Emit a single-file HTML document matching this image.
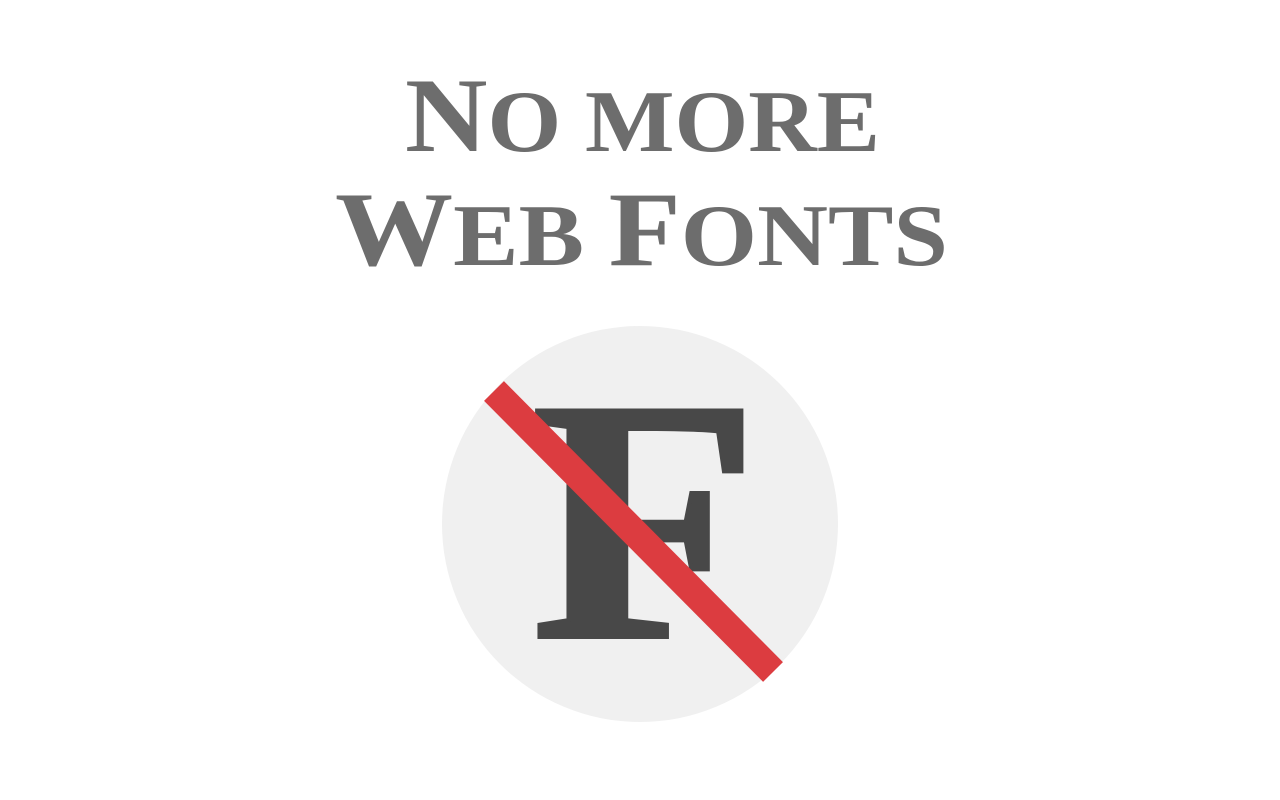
<!DOCTYPE html>
<html><head><meta charset="utf-8"><style>
html,body{margin:0;padding:0;background:#fff;width:1280px;height:800px;overflow:hidden}
svg{display:block}
</style></head><body>
<svg width="1280" height="800" viewBox="0 0 1280 800" xmlns="http://www.w3.org/2000/svg">
<g font-family="Liberation Serif, serif" font-weight="bold" fill="#6d6d6d">
<text x="405" y="151" textLength="475" lengthAdjust="spacingAndGlyphs"><tspan font-size="106">N</tspan><tspan font-size="88">O MORE</tspan></text>
<text x="335" y="265" textLength="613" lengthAdjust="spacingAndGlyphs"><tspan font-size="106">W</tspan><tspan font-size="88">EB </tspan><tspan font-size="106">F</tspan><tspan font-size="88">ONTS</tspan></text>
</g>
<circle cx="640" cy="524" r="198" fill="#f0f0f0"/>
<g transform="translate(645 0) scale(1.08 1) translate(-641 0)">
<text x="641" y="637" text-anchor="middle" font-family="Liberation Serif, serif" font-weight="bold" font-size="346" fill="#484848" stroke="#484848" stroke-width="4">F</text>
</g>
<line x1="494" y1="391" x2="773" y2="672" stroke="#dc3c40" stroke-width="28"/>
</svg>
</body></html>
